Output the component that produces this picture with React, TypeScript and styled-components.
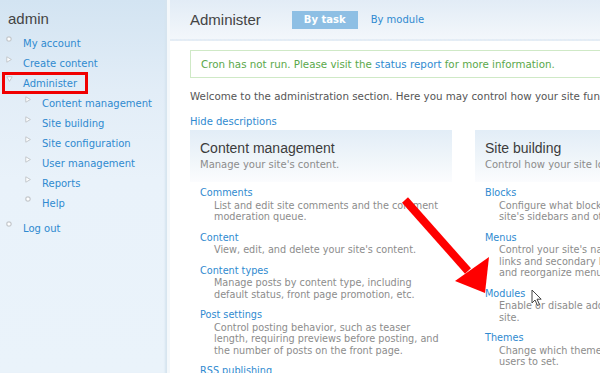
import React from "react";
import styled, { createGlobalStyle } from "styled-components";

const GlobalStyle = createGlobalStyle`
    html, body {
        margin: 0;
        padding: 0;
        background: #ffffff;
    }
    body {
        font-family: "DejaVu Sans", Verdana, sans-serif;
        font-size: 10px;
        color: #555;
        overflow: hidden;
    }
`;

type Bullet = "leaf" | "collapsed" | "expanded";

interface NavItem {
    label: string;
    bullet: Bullet;
    highlight?: boolean;
    children?: NavItem[];
}

const nav: NavItem[] = [
    { label: "My account", bullet: "leaf" },
    { label: "Create content", bullet: "collapsed" },
    {
        label: "Administer",
        bullet: "expanded",
        highlight: true,
        children: [
            { label: "Content management", bullet: "collapsed" },
            { label: "Site building", bullet: "collapsed" },
            { label: "Site configuration", bullet: "collapsed" },
            { label: "User management", bullet: "collapsed" },
            { label: "Reports", bullet: "collapsed" },
            { label: "Help", bullet: "leaf" },
        ],
    },
];

interface Task {
    title: string;
    lines: string[];
}

const contentTasks: Task[] = [
    { title: "Comments", lines: ["List and edit site comments and the comment", "moderation queue."] },
    { title: "Content", lines: ["View, edit, and delete your site's content."] },
    { title: "Content types", lines: ["Manage posts by content type, including", "default status, front page promotion, etc."] },
    {
        title: "Post settings",
        lines: ["Control posting behavior, such as teaser", "length, requiring previews before posting, and", "the number of posts on the front page."],
    },
    { title: "RSS publishing", lines: ["Configure the number of items per feed and"] },
];

const buildingTasks: Task[] = [
    { title: "Blocks", lines: ["Configure what block content appears in your", "site's sidebars and other regions."] },
    { title: "Menus", lines: ["Control your site's navigation menu, primary", "links and secondary links, as well as rename", "and reorganize menu items."] },
    { title: "Modules", lines: ["Enable or disable add-on modules for your", "site."] },
    { title: "Themes", lines: ["Change which theme your site uses or allows", "users to set."] },
];

function BulletIcon({ kind }: { kind: Bullet }) {
    if (kind === "leaf") {
        return (
            <svg width="6" height="6" viewBox="0 0 6 6">
                <circle cx="3" cy="3" r="2.2" fill="#fff" stroke="#c4c8cc" strokeWidth="1.2" />
            </svg>
        );
    }
    if (kind === "expanded") {
        return (
            <svg width="7" height="6" viewBox="0 0 7 6">
                <path d="M0.8 0.8 L6.2 0.8 L3.5 5.4 Z" fill="#fff" stroke="#c4c8cc" strokeWidth="1" />
            </svg>
        );
    }
    return (
        <svg width="6" height="7" viewBox="0 0 6 7">
            <path d="M0.8 0.8 L5.4 3.5 L0.8 6.2 Z" fill="#fff" stroke="#c4c8cc" strokeWidth="1" />
        </svg>
    );
}

function NavList({ items, nested }: { items: NavItem[]; nested?: boolean }) {
    return (
        <Menu $nested={nested}>
            {items.map((item) => (
                <li key={item.label}>
                    <MenuRow $highlight={item.highlight}>
                        <BulletBox>
                            <BulletIcon kind={item.bullet} />
                        </BulletBox>
                        <a href="#">{item.label}</a>
                    </MenuRow>
                    {item.children && <NavList items={item.children} nested />}
                </li>
            ))}
        </Menu>
    );
}

function TaskPanel({ title, subtitle, tasks }: { title: string; subtitle: string; tasks: Task[] }) {
    return (
        <Panel>
            <PanelHead>
                <h3>{title}</h3>
                <p>{subtitle}</p>
            </PanelHead>
            <TaskList>
                {tasks.map((t) => (
                    <li key={t.title}>
                        <a href="#">{t.title}</a>
                        <TaskDesc>
                            {t.lines.map((l) => (
                                <span key={l}>{l}</span>
                            ))}
                        </TaskDesc>
                    </li>
                ))}
            </TaskList>
        </Panel>
    );
}

function App() {
    return (
        <Page>
            <GlobalStyle />
            <Sidebar>
                <UserName>admin</UserName>
                <NavList items={nav} />
                <LogOut>
                    <NavList items={[{ label: "Log out", bullet: "leaf" }]} />
                </LogOut>
            </Sidebar>
            <Main>
                <Header>
                    <h2>Administer</h2>
                    <Tabs>
                        <Tab $active>By task</Tab>
                        <Tab>By module</Tab>
                    </Tabs>
                </Header>
                <Body>
                    <Status>
                        Cron has not run. Please visit the <a href="#">status report</a> for more information.
                    </Status>
                    <Intro>
                        Welcome to the administration section. Here you may control how your site functions.
                    </Intro>
                    <HideLink href="#">Hide descriptions</HideLink>
                    <Columns>
                        <TaskPanel title="Content management" subtitle="Manage your site's content." tasks={contentTasks} />
                        <TaskPanel title="Site building" subtitle="Control how your site looks and feels." tasks={buildingTasks} />
                    </Columns>
                </Body>
            </Main>
            <Annotation width="600" height="373" viewBox="0 0 600 373">
                <line x1="405" y1="200" x2="468" y2="271" stroke="#ff0000" strokeWidth="8" />
                <polygon points="455,281 489,257 485,293" fill="#ff0000" />
            </Annotation>
            <Cursor width="12" height="18" viewBox="0 0 12 18">
                <path d="M1 1 L1 14 L4 11 L6.5 16.5 L8.5 15.5 L6 10.2 L10.2 10.2 Z" fill="#fff" stroke="#444" strokeWidth="1" strokeLinejoin="round" />
            </Cursor>
        </Page>
    );
}

const Page = styled.div`
    position: relative;
    display: flex;
    width: 600px;
    height: 373px;
    overflow: hidden;
    background: #fff;
`;

const Sidebar = styled.aside`
    flex: 0 0 167px;
    padding: 10px 0 0 0;
    background: linear-gradient(180deg, #d3e4f2 0%, #e2edf7 90px, #e9f2fa 180px, #eaf3fa 100%);
    box-shadow: inset -3px 0 2px -1px #d6e4ef;
    border-right: 3px solid #f4f8fb;
`;

const UserName = styled.h2`
    margin: 0 0 5px 8px;
    font-family: "Liberation Sans", Arial, sans-serif;
    font-weight: normal;
    font-size: 15px;
    line-height: 18px;
    color: #444;
`;

const Menu = styled.ul<{ $nested?: boolean }>`
    list-style: none;
    margin: 0;
    padding: 0 0 0 ${(p) => (p.$nested ? "19px" : "0")};

    a {
        color: #2f8ad0;
        text-decoration: none;
    }
`;

const MenuRow = styled.div<{ $highlight?: boolean }>`
    display: flex;
    align-items: center;
    height: 20px;
    margin-left: ${(p) => (p.$highlight ? "3px" : "6px")};
    padding-left: ${(p) => (p.$highlight ? "3px" : "0")};
    width: ${(p) => (p.$highlight ? "84px" : "auto")};
    box-sizing: border-box;
    outline: ${(p) => (p.$highlight ? "3px solid #f00000" : "none")};
    outline-offset: ${(p) => (p.$highlight ? "-2px" : "0")};
`;

const BulletBox = styled.span`
    display: inline-flex;
    width: 17px;
    height: 10px;
    align-items: flex-start;
    justify-content: flex-start;
    margin-top: -4px;
`;

const LogOut = styled.div`
    margin-top: 5px;
`;

const Main = styled.main`
    flex: 1;
    min-width: 0;
    overflow: hidden;
`;

const Header = styled.header`
    display: flex;
    align-items: center;
    height: 39px;
    padding: 0 0 0 20px;
    background: linear-gradient(180deg, #e2ecf6 0%, #f3f7fb 100%);
    border-bottom: 2px dotted #e6edf4;

    h2 {
        margin: 0 31px 0 0;
        font-family: "Liberation Sans", Arial, sans-serif;
        font-weight: normal;
        font-size: 15px;
        color: #444;
    }
`;

const Tabs = styled.div`
    display: flex;
    align-items: center;
    gap: 13px;
`;

const Tab = styled.a<{ $active?: boolean }>`
    display: inline-flex;
    align-items: center;
    height: 18px;
    padding: 0 ${(p) => (p.$active ? "12px" : "0")};
    background: ${(p) => (p.$active ? "#8ebfe4" : "transparent")};
    color: ${(p) => (p.$active ? "#fff" : "#2f8ad0")};
    font-weight: ${(p) => (p.$active ? "bold" : "normal")};
    text-decoration: none;
    white-space: nowrap;
`;

const Body = styled.div`
    padding: 9px 0 0 20px;
`;

const Status = styled.div`
    width: 460px;
    box-sizing: border-box;
    height: 28px;
    line-height: 26px;
    padding-left: 10px;
    border: 1px solid #cfe9c6;
    color: #5aa84a;
    font-size: 10.3px;
    white-space: nowrap;

    a {
        color: #2f8ad0;
        text-decoration: none;
    }
`;

const Intro = styled.p`
    margin: 11px 0 0 0;
    line-height: 14px;
    font-size: 10.3px;
    white-space: nowrap;
`;

const HideLink = styled.a`
    display: block;
    margin-top: 12px;
    line-height: 14px;
    color: #2f8ad0;
    text-decoration: none;
`;

const Columns = styled.div`
    display: grid;
    grid-template-columns: 262px 262px;
    gap: 23px;
    margin-top: 1px;
`;

const Panel = styled.section`
    white-space: nowrap;
`;

const PanelHead = styled.div`
    padding: 10px 10px 0 10px;
    height: 42px;
    background:
        radial-gradient(circle, #ffffff 0.6px, transparent 0.7px) 0 0 / 2px 2px,
        linear-gradient(180deg, #e2edf7 0%, #f1f6fa 60%, #fbfcfe 100%);

    h3 {
        margin: 0;
        font-family: "Liberation Sans", Arial, sans-serif;
        font-weight: normal;
        font-size: 14px;
        line-height: 16px;
        color: #3c3c3c;
    }

    p {
        margin: 2px 0 0 0;
        line-height: 14px;
        color: #8c8c8c;
    }
`;

const TaskList = styled.ul`
    list-style: none;
    margin: 0;
    padding: 5px 0 0 10px;
    font-size: 9.7px;

    li {
        margin-bottom: 9px;
    }

    a {
        display: block;
        line-height: 12.5px;
        color: #2f8ad0;
        text-decoration: none;
    }
`;

const TaskDesc = styled.div`
    display: flex;
    flex-direction: column;
    padding-left: 14px;
    line-height: 11.5px;
    color: #8c8c8c;
`;

const Annotation = styled.svg`
    position: absolute;
    left: 0;
    top: 0;
    pointer-events: none;
`;

const Cursor = styled.svg`
    position: absolute;
    left: 531px;
    top: 289px;
    pointer-events: none;
`;

export default App;
